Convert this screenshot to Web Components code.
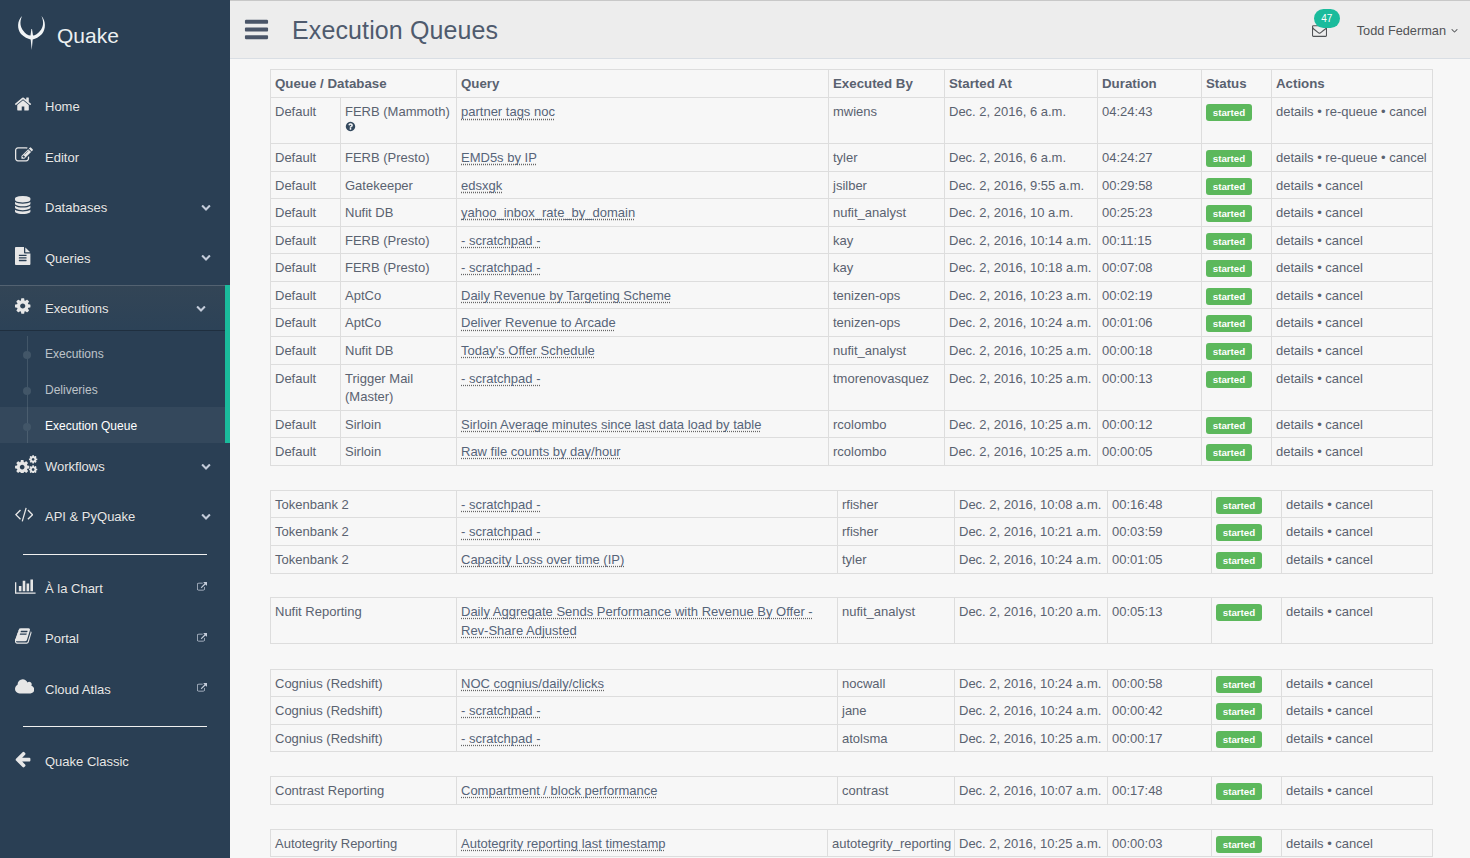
<!DOCTYPE html>
<html>
<head>
<meta charset="utf-8">
<title>Execution Queues</title>
<style>
    html, body { margin: 0; height: 100%; overflow: hidden; background: #2A3F54; }
    body { font-family: "Liberation Sans", Arial, sans-serif; font-size: 13px; }
    app-shell { height: 858px; }
</style>
</head>
<body>
<app-shell>
    <side-nav slot="side"></side-nav>
    <top-bar slot="top" title="Execution Queues" user="Todd Federman" count="47"></top-bar>
    <queue-table cols="270,340,456,828,944,1097,1201,1271,1433" data-group="main" header></queue-table>
    <queue-table cols="270,456,837,954,1107,1211,1281,1433" data-group="tokenbank"></queue-table>
    <queue-table cols="270,456,837,954,1107,1211,1281,1433" data-group="nufit" style="margin-top:-.5px;margin-bottom:24.5px"></queue-table>
    <queue-table cols="270,456,837,954,1107,1211,1281,1433" data-group="cognius"></queue-table>
    <queue-table cols="270,456,837,954,1107,1211,1281,1433" data-group="contrast"></queue-table>
    <queue-table cols="270,456,827,954,1107,1211,1281,1433" data-group="autotegrity"></queue-table>
</app-shell>

<script>
// [right end of the box, path, left end of the box when trimmed for the sidebar]
const ICONS = {
    home: [1792, '<path d="M1472 992v480q0 26-19 45t-45 19h-384v-384h-256v384h-384q-26 0-45-19t-19-45v-480q0-1 .5-3t.5-3l575-474 575 474q1 2 1 6zm223-69l-62 74q-8 9-21 11h-3q-13 0-21-7l-692-577-692 577q-12 8-24 7-13-2-21-11l-62-74q-8-10-7-23.5t11-21.5l719-599q32-26 76-26t76 26l244 204v-195q0-14 9-23t23-9h192q14 0 23 9t9 23v408l219 182q10 8 11 21.5t-7 23.5z"/>', 97],
    edit: [1792, '<path d="M888 1184l116-116-152-152-116 116v56h96v96h56zm440-720q-16-16-33 1l-350 350q-17 17-1 33t33-1l350-350q17-17 1-33zm80 594v190q0 119-84.5 203.5t-203.5 84.5h-832q-119 0-203.5-84.5t-84.5-203.5v-832q0-119 84.5-203.5t203.5-84.5h832q63 0 117 25 15 7 18 23 3 17-9 29l-49 49q-14 14-32 8-23-6-45-6h-832q-66 0-113 47t-47 113v832q0 66 47 113t113 47h832q66 0 113-47t47-113v-126q0-13 9-22l64-64q15-15 35-7t20 29zm-96-738l288 288-672 672h-288v-288zm444 132l-92 92-288-288 92-92q28-28 68-28t68 28l152 152q28 28 28 68t-28 68z"/>', 0],
    database: [1792, '<path d="M896 768q237 0 443-43t325-127v170q0 69-103 128t-280 93.5-385 34.5-385-34.5-280-93.5-103-128v-170q119 84 325 127t443 43zm0 768q237 0 443-43t325-127v170q0 69-103 128t-280 93.5-385 34.5-385-34.5-280-93.5-103-128v-170q119 84 325 127t443 43zm0-384q237 0 443-43t325-127v170q0 69-103 128t-280 93.5-385 34.5-385-34.5-280-93.5-103-128v-170q119 84 325 127t443 43zm0-1152q208 0 385 34.5t280 93.5 103 128v128q0 69-103 128t-280 93.5-385 34.5-385-34.5-280-93.5-103-128v-128q0-69 103-128t280-93.5 385-34.5z"/>', 128],
    file: [1792, '<path d="M1596 476q14 14 28 36h-472v-472q22 14 36 28zm-476 164h544v1056q0 40-28 68t-68 28h-1344q-40 0-68-28t-28-68v-1600q0-40 28-68t68-28h800v544q0 40 28 68t68 28zm160 736v-64q0-14-9-23t-23-9h-704q-14 0-23 9t-9 23v64q0 14 9 23t23 9h704q14 0 23-9t9-23zm0-256v-64q0-14-9-23t-23-9h-704q-14 0-23 9t-9 23v64q0 14 9 23t23 9h704q14 0 23-9t9-23zm0-256v-64q0-14-9-23t-23-9h-704q-14 0-23 9t-9 23v64q0 14 9 23t23 9h704q14 0 23-9t9-23z"/>', 128],
    cog: [1792, '<path d="M1152 896q0-106-75-181t-181-75-181 75-75 181 75 181 181 75 181-75 75-181zm512-109v222q0 12-8 23t-20 13l-185 28q-19 54-39 91 35 50 107 138 10 12 10 25t-9 23q-27 37-99 108t-94 71q-12 0-26-9l-138-108q-44 23-91 38-16 136-29 186-7 28-36 28h-222q-14 0-24.5-8.5t-11.5-21.5l-28-184q-49-16-90-37l-141 107q-10 9-25 9-14 0-25-11-126-114-165-168-7-10-7-23 0-12 8-23 15-21 51-66.5t54-70.5q-27-50-41-99l-183-27q-13-2-21-12.5t-8-23.5v-222q0-12 8-23t19-13l186-28q14-46 39-92-40-57-107-138-10-12-10-24 0-10 9-23 26-36 98.5-107.5t94.5-71.5q13 0 26 10l138 107q44-23 91-38 16-136 29-186 7-28 36-28h222q14 0 24.5 8.5t11.5 21.5l28 184q49 16 90 37l142-107q9-9 24-9 13 0 25 10 129 119 165 170 7 8 7 22 0 12-8 23-15 21-51 66.5t-54 70.5q26 50 41 98l183 28q13 2 21 12.5t8 23.5z"/>', 128],
    code: [1820, '<path d="M553 1399l-50 50q-10 10-23 10t-23-10l-466-466q-10-10-10-23t10-23l466-466q10-10 23-10t23 10l50 50q10 10 10 23t-10 23l-393 393 393 393q10 10 10 23t-10 23zm591-1067l-373 1291q-4 13-15.5 19.5t-23.5 2.5l-62-17q-13-4-19.5-15.5t-2.5-24.5l373-1291q4-13 15.5-19.5t23.5-2.5l62 17q13 4 19.5 15.5t2.5 24.5zm657 651l-466 466q-10 10-23 10t-23-10l-50-50q-10-10-10-23t10-23l393-393-393-393q-10-10-10-23t10-23l50-50q10-10 23-10t23 10l466 466q10 10 10 23t-10 23z"/>', -20],
    chart: [2048, '<path d="M640 896v512h-256v-512h256zm384-512v1024h-256v-1024h256zm1024 1152v128h-2048v-1152h128v1024h1920zm-640-896v768h-256v-768h256zm384-384v1152h-256v-1152h256z"/>', 0],
    book: [1792, '<path d="M1703 478q40 57 18 129l-275 906q-19 64-76.5 107.5t-122.5 43.5h-923q-77 0-148.5-53.5t-99.5-131.5q-24-67-2-127 0-4 3-27t4-37q1-8-3-21.5t-3-19.5q2-11 8-21t16.5-23.5 16.5-23.5q23-38 45-91.5t30-91.5q3-10 .5-30t-.5-28q3-11 17-28t17-23q21-36 42-92t25-90q1-9-2.5-32t.5-28q4-13 22-30.5t22-22.5q19-26 42.5-84.5t27.5-96.5q1-8-3-25.5t-2-26.5q2-8 9-18t18-23 17-21q8-12 16.5-30.5t15-35 16-36 19.5-32 26.5-23.5 36-11.5 47.5 5.5l-1 3q38-9 51-9h761q74 0 114 56t18 130l-274 906q-36 119-71.5 153.5t-128.5 34.5h-869q-27 0-38 15-11 16-1 43 24 70 144 70h923q29 0 56-15.5t35-41.5l300-987q7-22 5-57 38 15 59 43zm-1064 2q-4 13 2 22.5t20 9.5h608q13 0 25.5-9.5t16.5-22.5l21-64q4-13-2-22.5t-20-9.5h-608q-13 0-25.5 9.5t-16.5 22.5zm-83 256q-4 13 2 22.5t20 9.5h608q13 0 25.5-9.5t16.5-22.5l21-64q4-13-2-22.5t-20-9.5h-608q-13 0-25.5 9.5t-16.5 22.5z"/>', 80],
    cloud: [1856, '<path d="M1856 1152q0 159-112.5 271.5t-271.5 112.5h-1088q-185 0-316.5-131.5t-131.5-316.5q0-132 71-241.5t187-163.5q-2-28-2-43 0-212 150-362t362-150q158 0 286.5 88t187.5 230q70-62 166-62 106 0 181 75t75 181q0 75-41 138 129 30 213 134.5t84 239.5z"/>', -64],
    back: [1792, '<path d="M1664 896v128q0 53-32.5 90.5t-84.5 37.5h-704l293 294q38 36 38 90t-38 90l-75 76q-37 37-90 37-52 0-91-37l-651-652q-37-37-37-90 0-52 37-91l651-650q38-38 91-38 52 0 90 38l75 74q38 38 38 91t-38 91l-293 293h704q52 0 84.5 37.5t32.5 90.5z"/>', 128],
    external: [1792, '<path d="M1408 928v320q0 119-84.5 203.5t-203.5 84.5h-832q-119 0-203.5-84.5t-84.5-203.5v-832q0-119 84.5-203.5t203.5-84.5h704q14 0 23 9t9 23v64q0 14-9 23t-23 9h-704q-66 0-113 47t-47 113v832q0 66 47 113t113 47h832q66 0 113-47t47-113v-320q0-14 9-23t23-9h64q14 0 23 9t9 23zm384-864v512q0 26-19 45t-45 19-45-19l-176-176-652 652q-10 10-23 10t-23-10l-114-114q-10-10-10-23t10-23l652-652-176-176q-19-19-19-45t19-45 45-19h512q26 0 45 19t19 45z"/>', 0],
    chevron: [1792, '<path d="M1683 808l-742 741q-19 19-45 19t-45-19l-742-741q-19-19-19-45.5t19-45.5l166-165q19-19 45-19t45 19l531 531 531-531q19-19 45-19t45 19l166 165q19 19 19 45.5t-19 45.5z"/>', 0],
    angle: [1792, '<path d="M1395 736q0 13-10 23l-466 466q-10 10-23 10t-23-10l-466-466q-10-10-10-23t10-23l50-50q10-10 23-10t23 10l393 393 393-393q10-10 23-10t23 10l50 50q10 10 10 23z"/>', 0],
    question: [1792, '<path d="M1024 1376v-192q0-14-9-23t-23-9h-192q-14 0-23 9t-9 23v192q0 14 9 23t23 9h192q14 0 23-9t9-23zm256-672q0-88-55.5-163t-138.5-116-170-41q-243 0-371 213-15 24 8 42l132 100q7 6 19 6 16 0 25-12 53-68 86-92 34-24 86-24 48 0 85.5 26t37.5 59q0 38-20 61t-68 45q-63 28-115.5 86.5t-52.5 125.5v36q0 14 9 23t23 9h192q14 0 23-9t9-23q0-19 21.5-49.5t54.5-49.5q32-18 49-28.5t46-35 44.5-48 28-60.5 12.5-81zm384 192q0 209-103 385.5t-279.5 279.5-385.5 103-385.5-103-279.5-279.5-103-385.5 103-385.5 279.5-279.5 385.5-103 385.5 103 279.5 279.5 103 385.5z"/>', 0],
    envelope: [1792, '<path d="M1664 1504v-768q-32 36-69 66-268 206-426 338-51 43-83 67t-86.5 48.5-102.5 24.5h-2q-48 0-102.5-24.5t-86.5-48.5-83-67q-158-132-426-338-37-30-69-66v768q0 13 9.5 22.5t22.5 9.5h1472q13 0 22.5-9.5t9.5-22.5zm0-1051v-24.5l-.5-13-3-12.5-5.5-9-9-7.5-14-2.5h-1472q-13 0-22.5 9.5t-9.5 22.5q0 168 147 284 193 152 401 317 6 5 35 29.5t46 37.5 44.5 31.5 50.5 27.5 43 9h2q20 0 43-9t50.5-27.5 44.5-31.5 46-37.5 35-29.5q208-165 401-317 54-43 100.5-115.5t46.5-131.5zm128-37v1088q0 66-47 113t-113 47h-1472q-66 0-113-47t-47-113v-1088q0-66 47-113t113-47h1472q66 0 113 47t47 113z"/>', 0],
    bars: [1792, '<path d="M1664 1344v128q0 26-19 45t-45 19h-1408q-26 0-45-19t-19-45v-128q0-26 19-45t45-19h1408q26 0 45 19t19 45zm0-512v128q0 26-19 45t-45 19h-1408q-26 0-45-19t-19-45v-128q0-26 19-45t45-19h1408q26 0 45 19t19 45zm0-512v128q0 26-19 45t-45 19h-1408q-26 0-45-19t-19-45v-128q0-26 19-45t45-19h1408q26 0 45 19t19 45z"/>', 0]
};

// cogs is three cog paths stacked
const cogPath = ICONS.cog[1];
ICONS.cogs = [2400, `<g transform="translate(0 380) scale(.92)">${cogPath}</g><g transform="translate(1430 -50) scale(.54)">${cogPath}</g><g transform="translate(1430 960) scale(.54)">${cogPath}</g>`, 110];

function icon(name, size) {
    const [w, body] = ICONS[name];
    const width = size * w / 1792;
    return `<svg width="${width}" height="${size}" viewBox="0 0 ${w} 1792" fill="currentColor" aria-hidden="true">${body}</svg>`;
}

function trimmedIcon(name, size) {
    const [w, body, left] = ICONS[name];
    const width = size * (w - left) / 1792;
    return `<svg width="${width}" height="${size}" viewBox="${left} 0 ${w - left} 1792" fill="currentColor" aria-hidden="true">${body}</svg>`;
}

class AppShell extends HTMLElement {
    constructor() {
        super();
        this.attachShadow({ mode: 'open' });
        this.shadowRoot.innerHTML = `
            <style>
                :host { display: grid; grid-template-columns: 230px 1fr; grid-template-rows: 59px 1fr; width: 1470px; overflow: hidden; }
                .side { grid-row: 1 / 3; background: #2A3F54; }
                .main { background: #F7F7F7; padding: 10.3px 37px 0 40px; overflow: hidden; }
            </style>
            <div class="side"><slot name="side"></slot></div>
            <slot name="top"></slot>
            <div class="main"><slot></slot></div>
        `;
    }
}

class NavItem extends HTMLElement {
    constructor() {
        super();
        this.attachShadow({ mode: 'open' });
    }

    connectedCallback() {
        const name = this.getAttribute('icon');
        const arrow = this.hasAttribute('arrow');
        const ext = this.hasAttribute('external');
        this.shadowRoot.innerHTML = `
            <style>
                :host { display: block; margin-bottom: 5px; }
                :host([open]) { margin-bottom: 0; border-right: 5px solid #1ABB9C; }
                .row { display: flex; align-items: center; height: 45.4px; color: #E7E7E7; text-shadow: rgba(0,0,0,.25) 0 -1px 0; padding: 0 19.5px 0 15px; box-sizing: border-box; }
                :host([external]) .row { padding-right: 23px; }
                :host([open]) .row { background: linear-gradient(#334556, #2C4257); box-shadow: rgba(0,0,0,.25) 0 1px 0, inset rgba(255,255,255,.16) 0 1px 0; }
                .ico { width: 30px; display: flex; align-items: center; position: relative; top: -1.5px; }
                .label { flex: 1; padding-top: 2px; }
                .arrow { display: flex; color: #C4CCDA; }
                .ext { display: flex; color: #C4CCDA; }
            </style>
            <div class="row">
                <span class="ico">${trimmedIcon(name, 18)}</span>
                <span class="label">${this.getAttribute('label')}</span>
                ${arrow ? `<span class="arrow">${icon('chevron', 10)}</span>` : ''}
                ${ext ? `<span class="ext">${icon('external', 10)}</span>` : ''}
            </div>
            <slot></slot>
        `;
    }
}

class NavSub extends HTMLElement {
    constructor() {
        super();
        this.attachShadow({ mode: 'open' });
        this.shadowRoot.innerHTML = `
            <style>
                :host { display: block; position: relative; margin-top: 4.6px; font-size: 12px; }
                .line { position: absolute; left: 27px; top: 1px; bottom: 0; width: 1px; background: #425668; }
            </style>
            <div class="line"></div>
            <slot></slot>
        `;
    }
}

class NavSubItem extends HTMLElement {
    constructor() {
        super();
        this.attachShadow({ mode: 'open' });
        this.shadowRoot.innerHTML = `
            <style>
                :host { display: flex; align-items: center; height: 36px; box-sizing: border-box; padding: 2px 0 0 45px; color: rgba(255,255,255,.7); position: relative; }
                :host([active]) { background: rgba(255,255,255,.05); color: #fff; }
                .dot { position: absolute; left: 23px; top: 16px; width: 8px; height: 8px; border-radius: 50%; background: #425668; }
            </style>
            <span class="dot"></span>
            <slot></slot>
        `;
    }
}

class SideNav extends HTMLElement {
    constructor() {
        super();
        this.attachShadow({ mode: 'open' });
        this.shadowRoot.innerHTML = `
            <style>
                :host { display: block; font-size: 13px; }
                .brand { height: 83.3px; box-sizing: border-box; display: flex; align-items: flex-start; padding: 15px 0 0 17px; color: #ECF0F1; }
                .brand span { font-size: 21px; margin: 8px 0 0 10px; line-height: 26px; }
                hr { border: 0; height: 1px; background: #F0F0F0; margin: 15px 23px 10px 23px; }
                hr.last { margin-bottom: 11px; }
            </style>
            <div class="brand">
                <svg width="30" height="36" viewBox="0 0 30 36" fill="#F2F5F7">
                    <path d="M5 1 C0 6 0 14 4 19 C7 22 11 24 13.7 24.5 L14.7 35 L15.7 24.5 C18.5 24 22 22 25 19 C29 14 29 6 24.5 1 C27 7 26.5 12 23 16 C21 18.5 18 20.5 16 20.5 L15 14 L14.4 14 L13.5 20.5 C11 20.5 8 18.5 6.5 16 C3 12 2.5 7 5 1 Z"/>
                </svg>
                <span>Quake</span>
            </div>
            <nav-item icon="home" label="Home"></nav-item>
            <nav-item icon="edit" label="Editor"></nav-item>
            <nav-item icon="database" label="Databases" arrow></nav-item>
            <nav-item icon="file" label="Queries" arrow></nav-item>
            <nav-item icon="cog" label="Executions" arrow open>
                <nav-sub>
                    <nav-sub-item>Executions</nav-sub-item>
                    <nav-sub-item>Deliveries</nav-sub-item>
                    <nav-sub-item active>Execution Queue</nav-sub-item>
                </nav-sub>
            </nav-item>
            <nav-item icon="cogs" label="Workflows" arrow></nav-item>
            <nav-item icon="code" label="API &amp; PyQuake" arrow></nav-item>
            <hr>
            <nav-item icon="chart" label="À la Chart" external></nav-item>
            <nav-item icon="book" label="Portal" external></nav-item>
            <nav-item icon="cloud" label="Cloud Atlas" external></nav-item>
            <hr class="last">
            <nav-item icon="back" label="Quake Classic"></nav-item>
        `;
    }
}

class TopBar extends HTMLElement {
    constructor() {
        super();
        this.attachShadow({ mode: 'open' });
    }

    connectedCallback() {
        this.shadowRoot.innerHTML = `
            <style>
                :host { display: flex; align-items: center; height: 59px; box-sizing: border-box; background: #EDEDED; border-top: 1px solid #C8C8C8; border-bottom: 1px solid #D9DEE4; color: #515356; }
                .bars { display: flex; margin-left: 13px; color: #4A5568; }
                h1 { flex: 1; margin: 0 0 0 22px; font-size: 25px; font-weight: 400; letter-spacing: .12px; color: #4F5B6E; line-height: 30px; }
                .mail { position: relative; display: flex; margin-right: 30px; margin-top: 2px; }
                .badge { position: absolute; left: 2px; top: -14px; width: 26px; height: 19px; border-radius: 10px; background: #1ABB9C; color: #fff; font-size: 10px; line-height: 19px; text-align: center; }
                .user { display: flex; align-items: center; gap: 3px; margin-right: 10px; padding-top: 2px; font-size: 12.75px; color: #515356; }
            </style>
            <span class="bars">${icon('bars', 27)}</span>
            <h1>${this.getAttribute('title')}</h1>
            <span class="mail">${icon('envelope', 15)}<span class="badge">${this.getAttribute('count')}</span></span>
            <span class="user">${this.getAttribute('user')} ${icon('angle', 11)}</span>
        `;
    }
}

const RUNS = {
    main: [
        ['Default', 'FERB (Mammoth)|?', 'partner tags noc', 'mwiens', 'Dec. 2, 2016, 6 a.m.', '04:24:43', 'details • re-queue • cancel'],
        ['Default', 'FERB (Presto)', 'EMD5s by IP', 'tyler', 'Dec. 2, 2016, 6 a.m.', '04:24:27', 'details • re-queue • cancel'],
        ['Default', 'Gatekeeper', 'edsxgk', 'jsilber', 'Dec. 2, 2016, 9:55 a.m.', '00:29:58'],
        ['Default', 'Nufit DB', 'yahoo_inbox_rate_by_domain', 'nufit_analyst', 'Dec. 2, 2016, 10 a.m.', '00:25:23'],
        ['Default', 'FERB (Presto)', '- scratchpad -', 'kay', 'Dec. 2, 2016, 10:14 a.m.', '00:11:15'],
        ['Default', 'FERB (Presto)', '- scratchpad -', 'kay', 'Dec. 2, 2016, 10:18 a.m.', '00:07:08'],
        ['Default', 'AptCo', 'Daily Revenue by Targeting Scheme', 'tenizen-ops', 'Dec. 2, 2016, 10:23 a.m.', '00:02:19'],
        ['Default', 'AptCo', 'Deliver Revenue to Arcade', 'tenizen-ops', 'Dec. 2, 2016, 10:24 a.m.', '00:01:06'],
        ['Default', 'Nufit DB', "Today's Offer Schedule", 'nufit_analyst', 'Dec. 2, 2016, 10:25 a.m.', '00:00:18'],
        ['Default', 'Trigger Mail (Master)', '- scratchpad -', 'tmorenovasquez', 'Dec. 2, 2016, 10:25 a.m.', '00:00:13'],
        ['Default', 'Sirloin', 'Sirloin Average minutes since last data load by table', 'rcolombo', 'Dec. 2, 2016, 10:25 a.m.', '00:00:12'],
        ['Default', 'Sirloin', 'Raw file counts by day/hour', 'rcolombo', 'Dec. 2, 2016, 10:25 a.m.', '00:00:05']
    ],
    tokenbank: [
        ['Tokenbank 2', '- scratchpad -', 'rfisher', 'Dec. 2, 2016, 10:08 a.m.', '00:16:48'],
        ['Tokenbank 2', '- scratchpad -', 'rfisher', 'Dec. 2, 2016, 10:21 a.m.', '00:03:59'],
        ['Tokenbank 2', 'Capacity Loss over time (IP)', 'tyler', 'Dec. 2, 2016, 10:24 a.m.', '00:01:05']
    ],
    nufit: [
        ['Nufit Reporting', 'Daily Aggregate Sends Performance with Revenue By Offer - Rev-Share Adjusted', 'nufit_analyst', 'Dec. 2, 2016, 10:20 a.m.', '00:05:13']
    ],
    cognius: [
        ['Cognius (Redshift)', 'NOC cognius/daily/clicks', 'nocwall', 'Dec. 2, 2016, 10:24 a.m.', '00:00:58'],
        ['Cognius (Redshift)', '- scratchpad -', 'jane', 'Dec. 2, 2016, 10:24 a.m.', '00:00:42'],
        ['Cognius (Redshift)', '- scratchpad -', 'atolsma', 'Dec. 2, 2016, 10:25 a.m.', '00:00:17']
    ],
    contrast: [
        ['Contrast Reporting', 'Compartment / block performance', 'contrast', 'Dec. 2, 2016, 10:07 a.m.', '00:17:48']
    ],
    autotegrity: [
        ['Autotegrity Reporting', 'Autotegrity reporting last timestamp', 'autotegrity_reporting', 'Dec. 2, 2016, 10:25 a.m.', '00:00:03']
    ]
};

class QueueTable extends HTMLElement {
    constructor() {
        super();
        this.attachShadow({ mode: 'open' });
    }

    connectedCallback() {
        const xs = this.getAttribute('cols').split(',').map(Number);
        const widths = xs.slice(1).map((x, i) => x - xs[i]);
        const rows = RUNS[this.dataset.group];
        const twoFirst = xs.length === 9;

        const head = this.hasAttribute('header') ? `
            <div class="row head">
                <div class="c span2">Queue / Database</div><div class="c">Query</div><div class="c">Executed By</div>
                <div class="c">Started At</div><div class="c">Duration</div><div class="c">Status</div><div class="c">Actions</div>
            </div>` : '';

        const body = rows.map(r => {
            const cells = r.slice();
            const actions = cells.length > (twoFirst ? 6 : 5) ? cells.pop() : 'details • cancel';
            const q = twoFirst ? 2 : 1;
            return '<div class="row">' + cells.map((c, i) => {
                if (c.endsWith('|?')) {
                    return `<div class="c">${c.slice(0, -2)}<div class="help">${icon('question', 11)}</div></div>`;
                }
                return `<div class="c">${i === q ? `<a>${c}</a>` : c}</div>`;
            }).join('') + `<div class="c"><span class="label">started</span></div><div class="c">${actions}</div></div>`;
        }).join('');

        this.shadowRoot.innerHTML = `
            <style>
                :host { display: block; margin-bottom: 24px; font-size: 13px; line-height: 18.57px; color: #5A6270; border-bottom: 1px solid #DDD; width: 1163px; }
                .row { display: grid; grid-template-columns: ${widths.map(w => w + 'px').join(' ')}; }
                .c { border-left: 1px solid #DDD; border-top: 1px solid #DDD; padding: 5px 4px 3px; min-width: 0; }
                .c:last-child { border-right: 1px solid #DDD; }
                .span2 { grid-column: span 2; }
                .head .c { font-size: 13.3px; font-weight: 700; padding: 4.6px 4px 4px; }
                a { color: #566479; text-decoration: underline dotted #666; text-underline-offset: 1.5px; text-decoration-skip-ink: none; }
                .help { height: 18.57px; margin-top: -.5px; color: #34495E; }
                .help svg { display: block; transform: translateY(-1px); }
                .label { display: block; width: 46px; height: 17px; box-sizing: border-box; background: #5CB85C; color: #fff; font-size: 9.75px; font-weight: 700; line-height: 17px; text-align: center; border-radius: 3px; margin-top: 1px; }
            </style>
            ${head}${body}
        `;
    }
}

customElements.define('app-shell', AppShell);
customElements.define('nav-item', NavItem);
customElements.define('nav-sub', NavSub);
customElements.define('nav-sub-item', NavSubItem);
customElements.define('side-nav', SideNav);
customElements.define('top-bar', TopBar);
customElements.define('queue-table', QueueTable);
</script>
</body>
</html>
